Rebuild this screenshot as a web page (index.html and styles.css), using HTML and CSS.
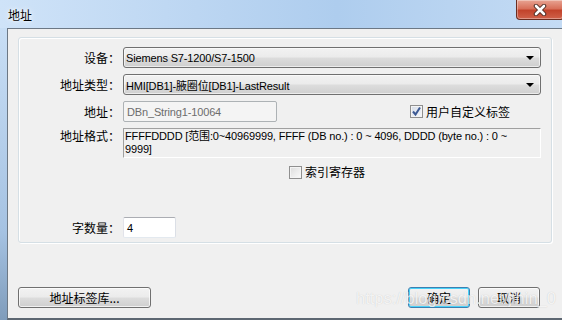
FILE: index.html
```html
<!DOCTYPE html>
<html lang="zh-CN">
<head>
    <meta charset="UTF-8">
    <title>地址</title>
    <link rel="stylesheet" href="styles.css">
</head>
<body>
    <div class="window">
        <div class="titlebar">
            <span class="title">地址</span>
            <button class="close-btn" type="button">
                <svg width="14" height="12" viewBox="0 0 14 12">
                    <path d="M3 2L11 10M11 2L3 10" stroke="#4a2a22" stroke-width="4.5" stroke-linecap="round"/>
                    <path d="M3 2L11 10M11 2L3 10" stroke="#ffffff" stroke-width="2.6" stroke-linecap="round"/>
                </svg>
            </button>
        </div>

        <div class="frame">
            <div class="frame-left"></div>
            <div class="client">
                <div class="group">
                    <div class="row">
                        <label class="label">设备：</label>
                        <div class="select">
                            <span>Siemens S7-1200/S7-1500</span>
                            <span class="arrow"></span>
                        </div>
                    </div>

                    <div class="row">
                        <label class="label">地址类型：</label>
                        <div class="select">
                            <span>HMI[DB1]-腋圈位[DB1]-LastResult</span>
                            <span class="arrow"></span>
                        </div>
                    </div>

                    <div class="row">
                        <label class="label">地址：</label>
                        <div class="control-line">
                            <div class="input disabled">DBn_String1-10064</div>
                            <label class="check custom-tag">
                                <span class="box checked">
                                    <svg width="11" height="11" viewBox="0 0 11 11">
                                        <path d="M2 5.5L4.5 8.5L9 1.5" fill="none" stroke="#3d5a94" stroke-width="2"/>
                                    </svg>
                                </span>
                                用户自定义标签
                            </label>
                        </div>
                    </div>

                    <div class="row row-top">
                        <label class="label">地址格式：</label>
                        <div class="format">FFFFDDDD [范围:0~40969999, FFFF (DB no.) : 0 ~ 4096, DDDD (byte no.) : 0 ~<br>9999]</div>
                    </div>

                    <div class="row row-check">
                        <span class="label"></span>
                        <label class="check index-reg">
                            <span class="box"></span>
                            索引寄存器
                        </label>
                    </div>

                    <div class="row row-count">
                        <label class="label">字数量：</label>
                        <div class="input count">4</div>
                    </div>
                </div>

                <div class="buttons">
                    <button class="btn lib-btn" type="button">地址标签库...</button>
                    <div class="actions">
                        <button class="btn ok-btn" type="button">确定</button>
                        <button class="btn" type="button">取消</button>
                    </div>
                </div>
            </div>
        </div>

        <div class="watermark">https://blog.csdn.net/jihin_0</div>
    </div>
</body>
</html>
```

FILE: styles.css
```css
* {
    margin: 0;
    padding: 0;
    box-sizing: border-box;
}

body {
    width: 562px;
    height: 320px;
    overflow: hidden;
    font-family: 'Liberation Sans', 'Noto Sans CJK SC', sans-serif;
    font-size: 11px;
    color: #000;
    background: #f0f0f0;
}

.window {
    position: relative;
    width: 562px;
    height: 320px;
    display: flex;
    flex-direction: column;
    background: #b9d3ef;
}

/* Title bar */
.titlebar {
    height: 28px;
    display: flex;
    align-items: flex-start;
    justify-content: space-between;
    background: linear-gradient(90deg, #cfe3f8 0%, #bcd6f2 35%, #aecdee 60%, #c4dbf4 100%);
}

.title {
    font-family: 'Noto Sans CJK SC', sans-serif;
    font-size: 12px;
    line-height: 14px;
    margin: 8px 0 0 8px;
    text-shadow: 0 0 6px #fff, 0 0 3px #fff;
}

.close-btn {
    width: 48px;
    height: 20px;
    margin-right: -2px;
    border: 1px solid #6b2d20;
    border-top: none;
    border-radius: 0 0 4px 4px;
    background: linear-gradient(#e8a493 0%, #d8705a 45%, #c2432b 55%, #d0614a 100%);
    display: flex;
    align-items: center;
    justify-content: center;
    box-shadow: inset 0 0 0 1px rgba(255, 255, 255, 0.35);
}

/* Frame + client area */
.frame {
    flex: 1;
    display: flex;
}

.frame-left {
    width: 7px;
    background: linear-gradient(#c8def5, #a5c2e2 70%, #7f9cbb);
}

.client {
    flex: 1;
    background: #f0f0f0;
    border-top: 1px solid #6c7885;
    border-left: 1px solid #6c7885;
    border-bottom: 2px solid #5d6772;
    padding: 8px 10px 0 10px;
    display: flex;
    flex-direction: column;
}

.group {
    height: 206px;
    border: 1px solid #d5dfe5;
    border-radius: 3px;
    box-shadow: inset 1px 1px 0 #fff, 1px 1px 0 #fff;
    padding: 9px 10px 0 0;
}

.row {
    display: grid;
    grid-template-columns: 101px 1fr;
    column-gap: 3px;
    align-items: center;
    margin-bottom: 6px;
}

.row-top {
    align-items: start;
    margin-top: 2px;
}

.row-check {
    margin-top: 0;
    margin-bottom: 0;
}

.row-count {
    margin-top: 37px;
}

.label {
    font-family: 'Noto Sans CJK SC', sans-serif;
    font-size: 12px;
    text-align: right;
    white-space: nowrap;
}

.row-top .label {
    line-height: 16px;
}

/* Combo boxes */
.select {
    height: 21px;
    border: 1px solid #707070;
    border-radius: 3px;
    background: linear-gradient(#f2f2f2 0%, #ebebeb 49%, #dddddd 51%, #cfcfcf 100%);
    display: flex;
    align-items: center;
    justify-content: space-between;
    padding: 0 6px 0 2px;
    letter-spacing: -0.15px;
    box-shadow: inset 0 0 0 1px rgba(255, 255, 255, 0.6);
}

.arrow {
    width: 0;
    height: 0;
    border-left: 4px solid transparent;
    border-right: 4px solid transparent;
    border-top: 4px solid #000;
}

/* Edit boxes */
.control-line {
    display: flex;
    align-items: center;
}

.input {
    height: 21px;
    border: 1px solid #abadb3;
    border-left-color: #e2e3ea;
    border-right-color: #dbdfe6;
    border-bottom-color: #e3e9ef;
    border-radius: 2px;
    background: #fff;
    display: flex;
    align-items: center;
    padding-left: 3px;
    letter-spacing: -0.15px;
}

.input.disabled {
    width: 154px;
    background: #f4f4f4;
    color: #6d6d6d;
    border-color: #adb2b5;
}

.input.count {
    width: 53px;
    color: #000;
}

/* Check boxes */
.check {
    display: flex;
    align-items: center;
    font-family: 'Noto Sans CJK SC', sans-serif;
    font-size: 12px;
    gap: 3px;
}

.custom-tag {
    margin-left: 133px;
}

.index-reg {
    margin-left: 166px;
    line-height: 16px;
}

.box {
    width: 13px;
    height: 13px;
    border: 1px solid #8f8f8f;
    background: linear-gradient(135deg, #dcdcdc, #fbfbfb);
    box-shadow: inset 0 0 0 1px #f4f4f4;
    display: flex;
    align-items: center;
    justify-content: center;
}

.box.checked {
    background: linear-gradient(135deg, #d5dce8, #f6f8fb);
}

/* Static format text */
.format {
    height: 30px;
    border-top: 1px solid #a0a0a0;
    border-left: 1px solid #a0a0a0;
    border-right: 1px solid #fff;
    border-bottom: 1px solid #fff;
    padding: 1px 0 0 1px;
    line-height: 13px;
    letter-spacing: -0.15px;
}

/* Bottom buttons */
.buttons {
    display: flex;
    justify-content: space-between;
    align-items: center;
    margin-top: 44px;
    padding-right: 12px;
}

.actions {
    display: flex;
    gap: 8px;
}

.btn {
    height: 21px;
    width: 62px;
    border: 1px solid #707070;
    border-radius: 3px;
    background: linear-gradient(#f2f2f2 0%, #ebebeb 49%, #dddddd 51%, #cfcfcf 100%);
    box-shadow: inset 0 0 0 1px rgba(255, 255, 255, 0.7);
    font-family: 'Noto Sans CJK SC', sans-serif;
    font-size: 12px;
    color: #000;
}

.lib-btn {
    width: 133px;
}

.ok-btn {
    border-color: #3c7fb1;
    box-shadow: inset 0 0 0 1px #48d2f9;
}

.watermark {
    position: absolute;
    left: 356px;
    top: 289px;
    font-family: 'Liberation Sans', sans-serif;
    font-size: 16.5px;
    color: rgba(255, 255, 255, 0.78);
    text-shadow: 0 0 1px rgba(0, 0, 0, 0.18);
    pointer-events: none;
}
```
